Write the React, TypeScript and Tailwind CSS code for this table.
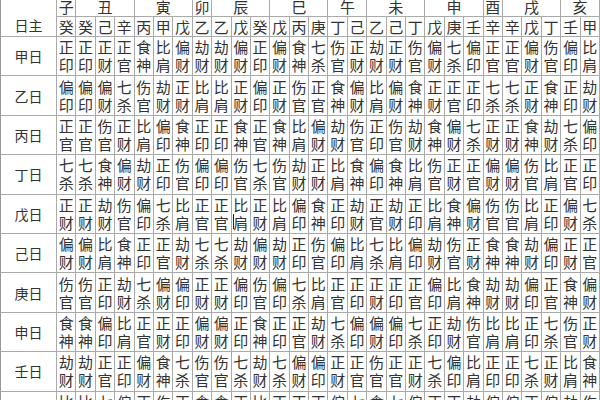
import React from "react";

const STEMS = ["甲", "乙", "丙", "丁", "戊", "己", "庚", "辛", "壬", "癸"];

const HIDDEN = [
  "癸",
  "癸", "己", "辛",
  "丙", "甲", "戊",
  "乙",
  "乙", "戊", "癸",
  "戊", "丙", "庚",
  "丁", "己",
  "乙", "己", "丁",
  "戊", "庚", "壬",
  "辛",
  "辛", "戊", "丁",
  "壬", "甲",
];

const SPAN: Record<number, string> = {
  1: "col-span-1",
  2: "col-span-2",
  3: "col-span-3",
};

const BRANCHES: [string, number][] = [
  ["子", 1], ["丑", 3], ["寅", 3], ["卯", 1], ["辰", 3], ["巳", 3],
  ["午", 2], ["未", 3], ["申", 3], ["酉", 1], ["戌", 3], ["亥", 2],
];

const ROWS: [string, string][] = [
  ["甲日", "甲"], ["乙日", "乙"], ["丙日", "丙"], ["丁日", "丁"], ["戊日", "戊"],
  ["己日", "己"], ["庚日", "庚"], ["申日", "辛"], ["壬日", "壬"], ["癸日", "癸"],
];

const GODS = [
  ["比肩", "劫财"],
  ["食神", "伤官"],
  ["偏财", "正财"],
  ["七杀", "正官"],
  ["偏印", "正印"],
];

function god(day: string, other: string): string {
  const d = STEMS.indexOf(day);
  const o = STEMS.indexOf(other);
  const r = (Math.floor(o / 2) - Math.floor(d / 2) + 5) % 5;
  const same = d % 2 === o % 2;
  return GODS[r][same ? 0 : 1];
}

export default function App() {
  return (
    <div className="w-[600px] h-[400px] overflow-hidden bg-white text-[#333] font-['Noto_Sans_CJK_SC',sans-serif]">
      <div className="-mt-[4px] w-[600px] grid grid-cols-[57px_repeat(28,minmax(0,1fr))] grid-rows-[21px_20px_repeat(10,39.4px)]">
        <div className="row-span-2 border-l border-r border-b border-l-[#999] border-r-[#aaa] border-b-[#aaa] flex justify-center pt-[21px] text-[14px] leading-[16px]">
          日主
        </div>
        {BRANCHES.map(([b, n], i) => (
          <div
            key={"b" + i}
            className={`${SPAN[n]} border-r border-b border-[#aaa] flex items-center justify-center text-[15px] leading-[15px]`}
          >
            {b}
          </div>
        ))}
        {HIDDEN.map((s, i) => (
          <div
            key={"h" + i}
            className="border-r border-b border-[#aaa] flex items-center justify-center text-[15px] leading-[15px]"
          >
            {s}
          </div>
        ))}
        {ROWS.map(([label, stem], ri) => (
          <React.Fragment key={"r" + ri}>
            <div className="border-l border-r border-b border-l-[#999] border-r-[#aaa] border-b-[#aaa] flex items-center justify-center text-[14px] leading-[16px]">
              {label}
            </div>
            {HIDDEN.map((s, ci) => {
              const g = god(stem, s);
              return (
                <div
                  key={"c" + ri + "-" + ci}
                  className="relative border-r border-b border-[#aaa] flex flex-col items-center justify-center text-[15px] leading-[18px]"
                >
                  <span>{g[0]}</span>
                  <span>{g[1]}</span>
                  {ri === 4 && ci === 9 ? (
                    <span className="absolute left-[1px] top-[19px] w-[1.5px] h-[15px] bg-[#222]" />
                  ) : null}
                </div>
              );
            })}
          </React.Fragment>
        ))}
      </div>
    </div>
  );
}
